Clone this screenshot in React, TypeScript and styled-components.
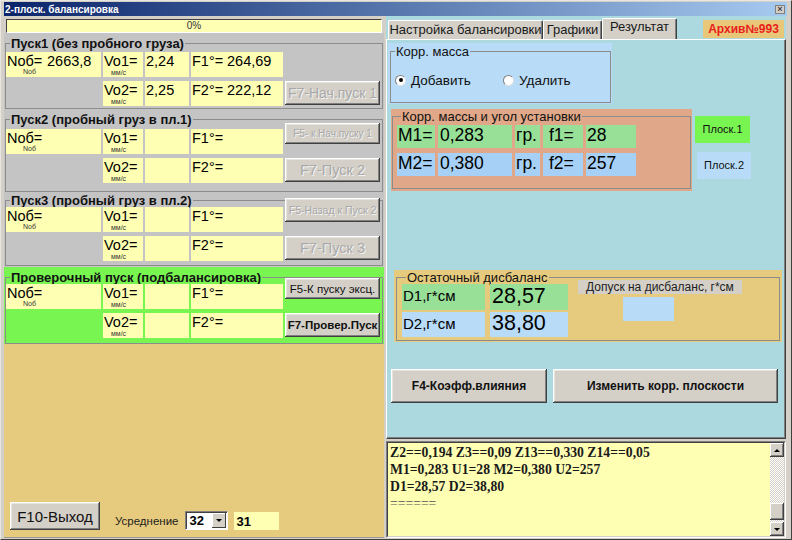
import React from "react"
import styled, { createGlobalStyle } from "styled-components"

const colors = {
  face: "#d4d0c8",
  grey: "#c4c4c4",
  yellow: "#ffffb4",
  green: "#78f550",
  tan: "#e6cb7e",
  sky: "#acd8e0",
  paleBlue: "#b8dcf8",
  salmon: "#e0a888",
  mint: "#98e098",
  cellBlue: "#a6d0f6",
}

const GlobalStyle = createGlobalStyle`
  html, body {
    margin: 0;
    padding: 0;
    background: ${colors.face};
  }
  body {
    font-family: "Liberation Sans", Arial, sans-serif;
  }
  * {
    box-sizing: border-box;
  }
`

const Window = styled.div`
  width: 792px;
  height: 540px;
  background: ${colors.face};
  border: 1px solid #404040;
  border-color: #e8e6e0 #404040 #404040 #e8e6e0;
  padding: 1px 4px 1px 3px;
  display: flex;
  flex-direction: column;
  overflow: hidden;
`

const TitleBar = styled.div`
  height: 14px;
  display: flex;
  align-items: center;
  justify-content: space-between;
  padding: 0 2px 0 1px;
  background: linear-gradient(to right, #0a246a, #a6caf0);
  color: #fff;
  font-size: 10px;
  font-weight: bold;
`

const CloseBox = styled.div`
  width: 10px;
  height: 9px;
  background: ${colors.face};
  border: 1px solid #808080;
  color: #404040;
  font-size: 9px;
  line-height: 7px;
  text-align: center;
`

const Body = styled.div`
  flex: 1;
  display: flex;
  gap: 2px;
`

/* ---------- left side ---------- */

const LeftPane = styled.div`
  width: 380px;
  display: flex;
  flex-direction: column;
`

const ProgressWrap = styled.div`
  height: 17px;
  padding: 3px 2px 0 2px;
`

const Progress = styled.div`
  height: 14px;
  background: ${colors.yellow};
  border: 1px solid;
  border-color: #404040 #ffffff #ffffff #404040;
  font-size: 10px;
  line-height: 12px;
  text-align: center;
  color: #333;
`

const Section = styled.div<{ $bg: string; $pt: number; $pb: number }>`
  background: ${p => p.$bg};
  padding: ${p => p.$pt}px 1px ${p => p.$pb}px 1px;
`

const Frame = styled.fieldset<{ $pl?: number; $pb: number }>`
  margin: 0;
  padding: 0 0 ${p => p.$pb}px ${p => p.$pl ?? 0}px;
  border: 1px solid #8c8c8c;
  min-width: 0;
`

const Legend = styled.legend<{ $bold?: boolean; $size?: number }>`
  padding: 0 1px;
  margin-left: 4px;
  font-size: ${p => p.$size ?? 13}px;
  line-height: 15px;
  font-weight: ${p => (p.$bold ? "bold" : "normal")};
  color: #111;
`

const Rows = styled.div<{ $mt: number }>`
  margin-top: ${p => p.$mt}px;
  display: grid;
  grid-template-columns: 95px 40px 44px 92px 95px;
  grid-template-rows: 25px 25px;
  gap: 4px 2px;
`

const Cell = styled.div<{ $bg?: string }>`
  background: ${p => p.$bg ?? colors.yellow};
  padding: 2px 0 0 1px;
  overflow: hidden;
`

const Blank = styled.div``

const Big = styled.div`
  font-size: 14.5px;
  line-height: 14px;
  white-space: pre;
  color: #000;
`

const Lbl = styled.span<{ $w: number }>`
  display: inline-block;
  width: ${p => p.$w}px;
`

const Tiny = styled.div<{ $ml: number; $mt: number }>`
  font-size: 7px;
  line-height: 7px;
  margin: ${p => p.$mt}px 0 0 ${p => p.$ml}px;
  color: #333;
`

const WinButton = styled.button<{
  $w?: number
  $h: number
  $fs: number
  $bold?: boolean
  $off?: boolean
  $dy?: number
}>`
  width: ${p => (p.$w ? `${p.$w}px` : "auto")};
  height: ${p => p.$h}px;
  margin: ${p => p.$dy ?? 0}px 0 0 0;
  align-self: start;
  padding: 0;
  font-family: inherit;
  font-size: ${p => p.$fs}px;
  font-weight: ${p => (p.$bold ? "bold" : "normal")};
  color: ${p => (p.$off ? "#a8a8a8" : "#111")};
  text-shadow: ${p => (p.$off ? "1px 1px 0 #f4f4f4" : "none")};
  background: ${colors.face};
  border: none;
  box-shadow: inset -1px -1px #404040, inset 1px 1px #ffffff,
    inset -2px -2px #808080, inset 2px 2px #e6e4de;
  white-space: nowrap;
  cursor: default;
`

const Filler = styled.div`
  flex: 1;
  background: ${colors.tan};
  display: flex;
  align-items: flex-end;
  padding: 0 0 7px 6px;
  border-bottom: 1px solid #9a9a9a;
`

const Footer = styled.div`
  display: flex;
  align-items: flex-end;
`

const AvgGroup = styled.div`
  display: flex;
  align-items: center;
  height: 19px;
  margin-left: 15px;
`

const AvgLabel = styled.span`
  font-size: 11.5px;
  color: #1c1c1c;
  margin-right: 7px;
`

const Combo = styled.div`
  width: 43px;
  height: 19px;
  background: #fff;
  border: 1px solid;
  border-color: #808080 #ffffff #ffffff #808080;
  box-shadow: inset 1px 1px #404040;
  display: flex;
  align-items: stretch;
  font-size: 13px;
  font-weight: bold;
`

const ComboText = styled.span`
  flex: 1;
  padding: 1px 0 0 3px;
  line-height: 15px;
`

const ComboBtn = styled.span`
  width: 14px;
  margin: 1px 1px 1px 0;
  background: ${colors.face};
  box-shadow: inset -1px -1px #404040, inset 1px 1px #ffffff;
  display: flex;
  align-items: center;
  justify-content: center;
`

const Arrow = styled.span<{ $up?: boolean }>`
  width: 0;
  height: 0;
  border-left: 3px solid transparent;
  border-right: 3px solid transparent;
  ${p =>
    p.$up
      ? "border-bottom: 3px solid #000;"
      : "border-top: 3px solid #000;"}
`

const AvgValue = styled.div`
  width: 45px;
  height: 18px;
  margin-left: 6px;
  background: ${colors.yellow};
  font-size: 13px;
  font-weight: bold;
  padding: 2px 0 0 2px;
`

/* ---------- right side ---------- */

const RightPane = styled.div`
  width: 400px;
  display: flex;
  flex-direction: column;
  gap: 0;
`

const TabRow = styled.div`
  height: 23px;
  background: ${colors.sky};
  display: flex;
  align-items: flex-end;
  padding-left: 2px;
`

const Tab = styled.div<{ $active?: boolean; $w: number }>`
  width: ${p => p.$w}px;
  height: ${p => (p.$active ? 21 : 19)}px;
  background: ${colors.face};
  border-top: 1px solid #fff;
  border-left: 1px solid #fff;
  border-right: 1px solid #404040;
  box-shadow: inset -1px 0 #808080;
  border-radius: 2px 2px 0 0;
  font-size: 13px;
  line-height: ${p => (p.$active ? 16 : 18)}px;
  text-align: center;
  color: #1a1a1a;
  white-space: nowrap;
`

const Archive = styled.div`
  margin: 0 2px 1px auto;
  width: 81px;
  height: 18px;
  background: #e8c878;
  color: #e8201c;
  font-size: 12px;
  font-weight: bold;
  line-height: 18px;
  text-align: center;
`

const TabBody = styled.div`
  height: 400px;
  background: ${colors.sky};
  border-top: 1px solid #fff;
  border-left: 1px solid #fff;
  border-right: 1px solid #404040;
  border-bottom: 1px solid #404040;
  box-shadow: inset -1px -1px #808080;
  display: flex;
  flex-direction: column;
  align-items: flex-start;
`

const Panel = styled.div<{
  $bg: string
  $w: number
  $h: number
  $ml: number
  $mt: number
  $pad: string
}>`
  background: ${p => p.$bg};
  width: ${p => p.$w}px;
  height: ${p => p.$h}px;
  margin: ${p => p.$mt}px 0 0 ${p => p.$ml}px;
  padding: ${p => p.$pad};
  display: flex;

  & > fieldset {
    flex: 1;
  }
`

const RadioRow = styled.div`
  margin-top: 13px;
  display: grid;
  grid-template-columns: 108px auto;
  padding-left: 4px;
`

const RadioItem = styled.label`
  display: flex;
  align-items: center;
  gap: 5px;
  font-size: 13.5px;
  color: #111;
  height: 16px;
`

const RadioDot = styled.span<{ $on?: boolean }>`
  width: 11px;
  height: 11px;
  border-radius: 50%;
  background: #fff;
  border: 1px solid #808080;
  border-right-color: #e0e0e0;
  border-bottom-color: #e0e0e0;
  display: flex;
  align-items: center;
  justify-content: center;

  &::after {
    content: "";
    width: 4px;
    height: 4px;
    border-radius: 50%;
    background: ${p => (p.$on ? "#000" : "transparent")};
  }
`

const MidRow = styled.div`
  display: flex;
  margin: 5px 0 0 4px;
`

const MassGrid = styled.div`
  margin-top: 1px;
  display: grid;
  grid-template-columns: 38px 74px 25px 40px 50px;
  grid-template-rows: 23px 23px;
  gap: 5px 3px;
`

const MassCell = styled.div<{ $bg: string; $pl?: number }>`
  background: ${p => p.$bg};
  font-size: 17.5px;
  line-height: 19px;
  padding: 1px 0 0 ${p => p.$pl ?? 1}px;
  color: #000;
  white-space: nowrap;
  overflow: hidden;
`

const PlaneCol = styled.div`
  display: flex;
  flex-direction: column;
  margin: 7px 0 0 3px;
`

const PlaneBtn = styled.div<{ $bg: string; $ml: number; $mt: number; $w: number }>`
  width: ${p => p.$w}px;
  height: 27px;
  margin: ${p => p.$mt}px 0 0 ${p => p.$ml}px;
  background: ${p => p.$bg};
  font-size: 11px;
  line-height: 27px;
  text-align: center;
  color: #111;
`

const ResidualRow = styled.div`
  display: flex;
  margin-top: -1px;
`

const ResidualGrid = styled.div`
  display: grid;
  grid-template-columns: 83px 78px;
  grid-template-rows: 26px 25px;
  gap: 2px 5px;
`

const ResCell = styled.div<{ $bg: string; $big?: boolean }>`
  background: ${p => p.$bg};
  display: flex;
  align-items: center;
  padding: ${p => (p.$big ? "0 0 2px 2px" : "0 0 3px 1px")};
  font-size: ${p => (p.$big ? 21.5 : 15)}px;
  color: #000;
  white-space: nowrap;
`

const Tolerance = styled.div`
  margin: -4px 0 0 10px;
  display: flex;
  flex-direction: column;
  align-items: flex-start;
`

const ToleranceLabel = styled.div`
  width: 164px;
  height: 14px;
  background: ${colors.face};
  font-size: 12px;
  line-height: 14px;
  text-align: center;
  color: #222;
`

const ToleranceBox = styled.div`
  width: 51px;
  height: 24px;
  margin: 3px 0 0 45px;
  background: ${colors.paleBlue};
`

const ButtonRow = styled.div`
  display: flex;
  gap: 6px;
  margin: 27px 0 0 4px;
`

const Memo = styled.div`
  height: 97px;
  margin-top: 2px;
  border: 1px solid;
  border-color: #808080 #ffffff #ffffff #808080;
  display: flex;
`

const MemoInner = styled.div`
  flex: 1;
  display: flex;
  border: 1px solid;
  border-color: #404040 ${colors.face} ${colors.face} #404040;
  background: ${colors.yellow};
`

const MemoText = styled.div`
  flex: 1;
  padding: 1px 0 0 2px;
  font-family: "Liberation Serif", "Times New Roman", serif;
  font-size: 13.7px;
  font-weight: bold;
  line-height: 17px;
  color: #1a1a1a;
  white-space: pre;
`

const MemoRule = styled.div`
  font-weight: normal;
  color: #555;
`

const ScrollBar = styled.div`
  width: 14px;
  display: flex;
  flex-direction: column;
`

const ScrollBtn = styled.div`
  height: 14px;
  background: ${colors.face};
  box-shadow: inset -1px -1px #404040, inset 1px 1px #ffffff,
    inset -2px -2px #808080;
  display: flex;
  align-items: center;
  justify-content: center;
`

const Track = styled.div`
  flex: 1;
  display: flex;
  flex-direction: column;
  justify-content: flex-end;
  padding-bottom: 2px;
  background: repeating-conic-gradient(#ffffff 0 25%, ${colors.face} 0 50%) 0 0 / 2px 2px;
`

const Thumb = styled.div`
  height: 17px;
  background: ${colors.face};
  box-shadow: inset -1px -1px #404040, inset 1px 1px #ffffff,
    inset -2px -2px #808080;
`

/* ---------- data ---------- */

type Btn = {
  text: string
  fs: number
  h: number
  dy?: number
  off?: boolean
  bold?: boolean
}

type Run = {
  title: string
  bg: string
  pt: number
  pb: number
  framePb: number
  mt: number
  nob?: string
  vo1?: string
  vo2?: string
  f1?: string
  f2?: string
  top?: Btn
  bottom: Btn
}

const runs: Run[] = [
  {
    title: "Пуск1 (без пробного груза)",
    bg: colors.grey,
    pt: 3,
    pb: 1,
    framePb: 2,
    mt: 1,
    nob: "2663,8",
    vo1: "2,24",
    vo2: "2,25",
    f1: "264,69",
    f2: "222,12",
    bottom: { text: "F7-Нач.пуск 1", fs: 14, h: 24, off: true },
  },
  {
    title: "Пуск2 (пробный груз в пл.1)",
    bg: colors.grey,
    pt: 2,
    pb: 1,
    framePb: 8,
    mt: 2,
    top: { text: "F5- к Нач.пуску 1", fs: 10, h: 21, dy: -6, off: true },
    bottom: { text: "F7-Пуск 2", fs: 14.5, h: 24, off: true },
  },
  {
    title: "Пуск3 (пробный груз в пл.2)",
    bg: colors.grey,
    pt: 0,
    pb: 1,
    framePb: 4,
    mt: -1,
    top: { text: "F5-Назад к Пуск 2", fs: 10.5, h: 24, dy: -9, off: true },
    bottom: { text: "F7-Пуск 3", fs: 14.5, h: 24, off: true },
  },
  {
    title: "Проверочный пуск (подбалансировка)",
    bg: colors.green,
    pt: 3,
    pb: 0,
    framePb: 5,
    mt: -1,
    top: { text: "F5-К пуску эксц.", fs: 11.5, h: 21, dy: -6 },
    bottom: { text: "F7-Провер.Пуск", fs: 11.5, h: 24, bold: true },
  },
]

const RunButton = ({ b }: { b: Btn }) => (
  <WinButton $w={95} $h={b.h} $fs={b.fs} $dy={b.dy} $off={b.off} $bold={b.bold}>
    {b.text}
  </WinButton>
)

const RunSection = ({ run }: { run: Run }) => (
  <Section $bg={run.bg} $pt={run.pt} $pb={run.pb}>
    <Frame $pb={run.framePb}>
      <Legend $bold>{run.title}</Legend>
      <Rows $mt={run.mt}>
        <Cell>
          <Big>
            <Lbl $w={40}>Noб=</Lbl>
            {run.nob ?? ""}
          </Big>
          <Tiny $ml={16} $mt={0}>
            Noб
          </Tiny>
        </Cell>
        <Cell>
          <Big>Vo1=</Big>
          <Tiny $ml={7} $mt={1}>
            мм/с
          </Tiny>
        </Cell>
        <Cell>
          <Big>{run.vo1 ?? ""}</Big>
        </Cell>
        <Cell>
          <Big>
            <Lbl $w={35}>F1°=</Lbl>
            {run.f1 ?? ""}
          </Big>
        </Cell>
        {run.top ? <RunButton b={run.top} /> : <Blank />}

        <Blank />
        <Cell>
          <Big>Vo2=</Big>
          <Tiny $ml={7} $mt={1}>
            мм/с
          </Tiny>
        </Cell>
        <Cell>
          <Big>{run.vo2 ?? ""}</Big>
        </Cell>
        <Cell>
          <Big>
            <Lbl $w={35}>F2°=</Lbl>
            {run.f2 ?? ""}
          </Big>
        </Cell>
        <RunButton b={run.bottom} />
      </Rows>
    </Frame>
  </Section>
)

const memoLines = [
  "Z2==0,194 Z3==0,09 Z13==0,330 Z14==0,05",
  "M1=0,283 U1=28 M2=0,380 U2=257",
  "D1=28,57 D2=38,80",
]

export default function App() {
  return (
    <>
      <GlobalStyle />
      <Window>
        <TitleBar>
          <span>2-плоск. балансировка</span>
          <CloseBox>×</CloseBox>
        </TitleBar>
        <Body>
          <LeftPane>
            <ProgressWrap>
              <Progress>0%</Progress>
            </ProgressWrap>
            {runs.map(r => (
              <RunSection key={r.title} run={r} />
            ))}
            <Filler>
              <Footer>
                <WinButton $w={90} $h={28} $fs={15}>
                  F10-Выход
                </WinButton>
                <AvgGroup>
                  <AvgLabel>Усреднение</AvgLabel>
                  <Combo>
                    <ComboText>32</ComboText>
                    <ComboBtn>
                      <Arrow />
                    </ComboBtn>
                  </Combo>
                  <AvgValue>31</AvgValue>
                </AvgGroup>
              </Footer>
            </Filler>
          </LeftPane>

          <RightPane>
            <TabRow>
              <Tab $w={155}>Настройка балансировки</Tab>
              <Tab $w={59}>Графики</Tab>
              <Tab $w={75} $active>
                Результат
              </Tab>
              <Archive>Архив№993</Archive>
            </TabRow>
            <TabBody>
              <Panel $bg={colors.paleBlue} $w={224} $h={61} $ml={1} $mt={3} $pad="1px 1px 1px 2px">
                <Frame $pb={0}>
                  <Legend>Корр. масса</Legend>
                  <RadioRow>
                    <RadioItem>
                      <RadioDot $on />
                      Добавить
                    </RadioItem>
                    <RadioItem>
                      <RadioDot />
                      Удалить
                    </RadioItem>
                  </RadioRow>
                </Frame>
              </Panel>

              <MidRow>
                <Panel $bg={colors.salmon} $w={301} $h={82} $ml={0} $mt={0} $pad="0 1px 2px 1px">
                  <Frame $pl={4} $pb={0}>
                    <Legend>Корр. массы и угол установки</Legend>
                    <MassGrid>
                      <MassCell $bg={colors.mint}>M1=</MassCell>
                      <MassCell $bg={colors.mint} $pl={2}>0,283</MassCell>
                      <MassCell $bg={colors.mint}>гр.</MassCell>
                      <MassCell $bg={colors.mint} $pl={6}>f1=</MassCell>
                      <MassCell $bg={colors.mint} $pl={1}>28</MassCell>
                      <MassCell $bg={colors.cellBlue}>M2=</MassCell>
                      <MassCell $bg={colors.cellBlue} $pl={2}>0,380</MassCell>
                      <MassCell $bg={colors.cellBlue}>гр.</MassCell>
                      <MassCell $bg={colors.cellBlue} $pl={6}>f2=</MassCell>
                      <MassCell $bg={colors.cellBlue} $pl={1}>257</MassCell>
                    </MassGrid>
                  </Frame>
                </Panel>
                <PlaneCol>
                  <PlaneBtn $bg={colors.green} $ml={0} $mt={0} $w={55}>
                    Плоск.1
                  </PlaneBtn>
                  <PlaneBtn $bg={colors.paleBlue} $ml={2} $mt={9} $w={54}>
                    Плоск.2
                  </PlaneBtn>
                </PlaneCol>
              </MidRow>

              <Panel $bg={colors.tan} $w={388} $h={72} $ml={7} $mt={79} $pad="0 2px 1px 2px">
                <Frame $pl={5} $pb={0}>
                  <Legend>Остаточный дисбаланс</Legend>
                  <ResidualRow>
                    <ResidualGrid>
                      <ResCell $bg={colors.mint}>D1,г*см</ResCell>
                      <ResCell $bg={colors.mint} $big>
                        28,57
                      </ResCell>
                      <ResCell $bg={colors.paleBlue}>D2,г*см</ResCell>
                      <ResCell $bg={colors.paleBlue} $big>
                        38,80
                      </ResCell>
                    </ResidualGrid>
                    <Tolerance>
                      <ToleranceLabel>Допуск на дисбаланс, г*см</ToleranceLabel>
                      <ToleranceBox />
                    </Tolerance>
                  </ResidualRow>
                </Frame>
              </Panel>

              <ButtonRow>
                <WinButton $w={156} $h={34} $fs={12} $bold>
                  F4-Коэфф.влияния
                </WinButton>
                <WinButton $w={225} $h={34} $fs={12} $bold>
                  Изменить корр. плоскости
                </WinButton>
              </ButtonRow>
            </TabBody>

            <Memo>
              <MemoInner>
                <MemoText>
                  {memoLines.map(l => (
                    <div key={l}>{l}</div>
                  ))}
                  <MemoRule>======</MemoRule>
                </MemoText>
                <ScrollBar>
                  <ScrollBtn>
                    <Arrow $up />
                  </ScrollBtn>
                  <Track>
                    <Thumb />
                  </Track>
                  <ScrollBtn>
                    <Arrow />
                  </ScrollBtn>
                </ScrollBar>
              </MemoInner>
            </Memo>
          </RightPane>
        </Body>
      </Window>
    </>
  )
}
